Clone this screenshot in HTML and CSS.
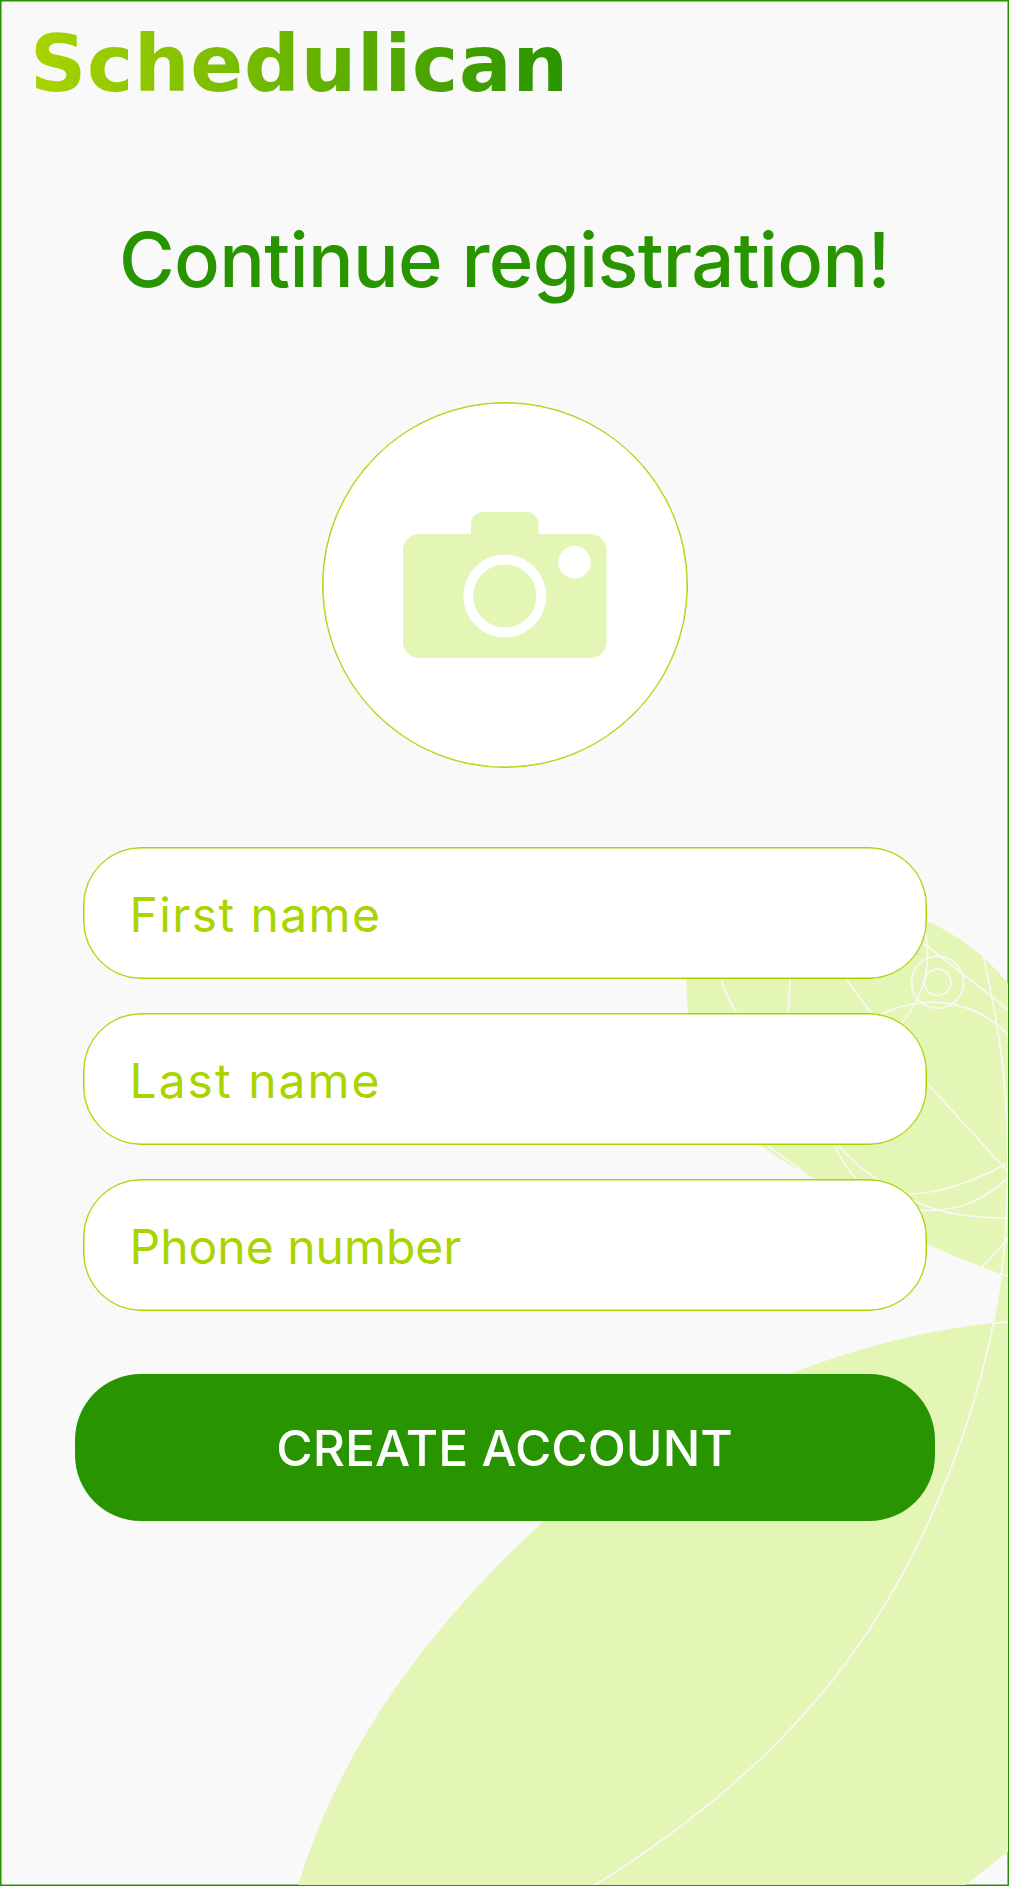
FILE: index.html
```html
<!DOCTYPE html>
<html lang="en">
<head>
<meta charset="utf-8">
<title>Schedulican</title>
<link rel="stylesheet" href="styles.css">
</head>
<body>
<main class="screen">
  <svg class="backdrop" viewBox="0 0 1009 1886" aria-hidden="true">
    <defs><clipPath id="inside"><rect width="1008" height="1885"/></clipPath></defs>
    <rect class="frame" x="0.75" y="0.75" width="1007.5" height="1884.5"/>
    <g clip-path="url(#inside)">
      <g class="leaf">
        <path d="M686.3 979 Q686.3 997 688 1014 C697 1065 719 1108 761 1145 Q781 1161 804 1172.500 L815 1179 C850 1204 885 1226 927 1244 Q962 1260 1001 1274 L1009 1277 V985 Q976 943 927 921 L700 921 Z"/>
        <path d="M1009 1276 L1001 1274 Q998 1300 992 1323 L1009 1322 Z"/>
        <path d="M792 1373 C865 1345 935 1328 1009 1321.500 V1851 L964 1886 H298 C337 1755 424 1630 544 1521 C610 1455 700 1405 792 1373 Z"/>
      </g>
      <g class="veins">
        <circle cx="937.600" cy="982.300" r="26"/>
        <circle cx="937.600" cy="982.300" r="13.200"/>
        <path d="M923 943 L1009 1010"/>
        <path d="M875 1017 C922 993 972 998 1009 1035"/>
        <path d="M925 930 C930 955 930 990 901 1024"/>
        <path d="M721.500 979 Q726 996 737 1014"/>
        <path d="M790.300 979 Q788.300 996 788.300 1014"/>
        <path d="M846 979 L872 1014"/>
        <path d="M926 1082 L1009 1173"/>
        <path d="M767 1145 L805 1173"/>
        <path d="M834.500 1145 Q842 1164 857 1179"/>
        <path d="M838 1145 Q855 1165 877 1179"/>
        <path d="M909 1194 C941 1193 974 1182 1009 1162"/>
        <path d="M912 1200 C941 1214 970 1218 1009 1218"/>
        <path d="M919 1210 C956 1213 984 1201 1009 1177"/>
        <path d="M982 1266.700 Q997 1253 1008 1238"/>
        <path d="M1000 1273.500 L1009 1276.500"/>
        <path d="M992 1323.500 L1009 1321.800"/>
        <path d="M983 956 C994 1003 1001 1045 1004 1080 C1008.500 1125 1009 1180 1005 1238 C1000 1306 986 1363 968 1420 C902 1624 790 1764 595 1885"/>
      </g>
    </g>
  </svg>

  <header class="brand">Schedulican</header>
  <h1 class="title">Continue registration!</h1>

  <button class="photo" type="button" aria-label="Add photo">
    <svg class="camera" viewBox="0 0 204 146" aria-hidden="true">
      <path class="camera-body" d="M68 22 V12 A12 12 0 0 1 80 0 H123.500 A12 12 0 0 1 135.500 12 V22 H187.500 A16 16 0 0 1 203.500 38 V130 A16 16 0 0 1 187.500 146 H16 A16 16 0 0 1 0 130 V38 A16 16 0 0 1 16 22 Z"/>
      <circle class="lens" cx="101.750" cy="84" r="36.500"/>
      <circle class="flash" cx="171.500" cy="50.200" r="16.300"/>
    </svg>
  </button>

  <form class="fields">
    <input class="field field-first" type="text" placeholder="First name" aria-label="First name">
    <input class="field field-last" type="text" placeholder="Last name" aria-label="Last name">
    <input class="field" type="text" placeholder="Phone number" aria-label="Phone number">
    <button class="submit" type="button">CREATE ACCOUNT</button>
  </form>
</main>
</body>
</html>
```

FILE: styles.css
```css
:root {
  --green: #289400;
  --lime: #aad400;
  --leaf: #e3f6b5;
  --paper: #f9f9f9;
}

* {
  box-sizing: border-box;
}

body {
  margin: 0;
  font-family: Inter, "Liberation Sans", sans-serif;
}

.screen {
  position: relative;
  display: flex;
  flex-direction: column;
  align-items: center;
  width: 1009px;
  height: 1886px;
  overflow: hidden;
  background: var(--paper);
}

.backdrop {
  position: absolute;
  inset: 0;
  width: 1009px;
  height: 1886px;
}

.frame {
  fill: none;
  stroke: var(--green);
  stroke-width: 1.5;
}

.leaf {
  fill: var(--leaf);
}

.veins {
  fill: none;
  stroke: var(--paper);
  stroke-width: 1.6;
}

.brand,
.title,
.photo,
.fields {
  position: relative;
}

.brand {
  align-self: flex-start;
  margin: 17px 0 0 30px;
  font: 700 78px/94px "DejaVu Sans", sans-serif;
  letter-spacing: 0.8px;
  white-space: nowrap;
  color: transparent;
  background: linear-gradient(90deg, var(--lime), var(--green));
  -webkit-background-clip: text;
  background-clip: text;
}

.title {
  margin: 102px 0 0;
  font-size: 76px;
  line-height: 92px;
  font-weight: 500;
  letter-spacing: -0.7px;
  white-space: nowrap;
  color: var(--green);
}

.photo {
  display: flex;
  flex: none;
  align-items: center;
  justify-content: center;
  width: 366px;
  height: 366px;
  margin-top: 97px;
  padding: 0 0 1px;
  border: 1px solid var(--lime);
  border-radius: 50%;
  background: #fff;
  box-shadow: inset 0 0 0 0.5px var(--lime);
}

.camera {
  width: 204px;
  height: 146px;
}

.camera-body {
  fill: var(--leaf);
}

.lens {
  fill: none;
  stroke: #fff;
  stroke-width: 9.8;
}

.flash {
  fill: #fff;
}

.fields {
  display: flex;
  flex-direction: column;
  align-items: center;
  gap: 34px;
  margin-top: 79px;
}

.field {
  width: 844px;
  height: 132px;
  padding: 3px 46px 0;
  border: 1px solid var(--lime);
  border-radius: 58px;
  background: #fff;
  box-shadow: inset 0 0 0 0.5px var(--lime);
  font: 400 48px Inter, sans-serif;
  color: var(--lime);
}

.field-first {
  letter-spacing: 1.4px;
}

.field-last {
  letter-spacing: 2px;
}

.field::placeholder {
  color: var(--lime);
  opacity: 1;
}

.submit {
  width: 860px;
  height: 147px;
  margin-top: 29px;
  padding: 0;
  border: 0;
  border-radius: 66px;
  background: var(--green);
  font: 500 49.7px Inter, sans-serif;
  color: #fff;
}
```
